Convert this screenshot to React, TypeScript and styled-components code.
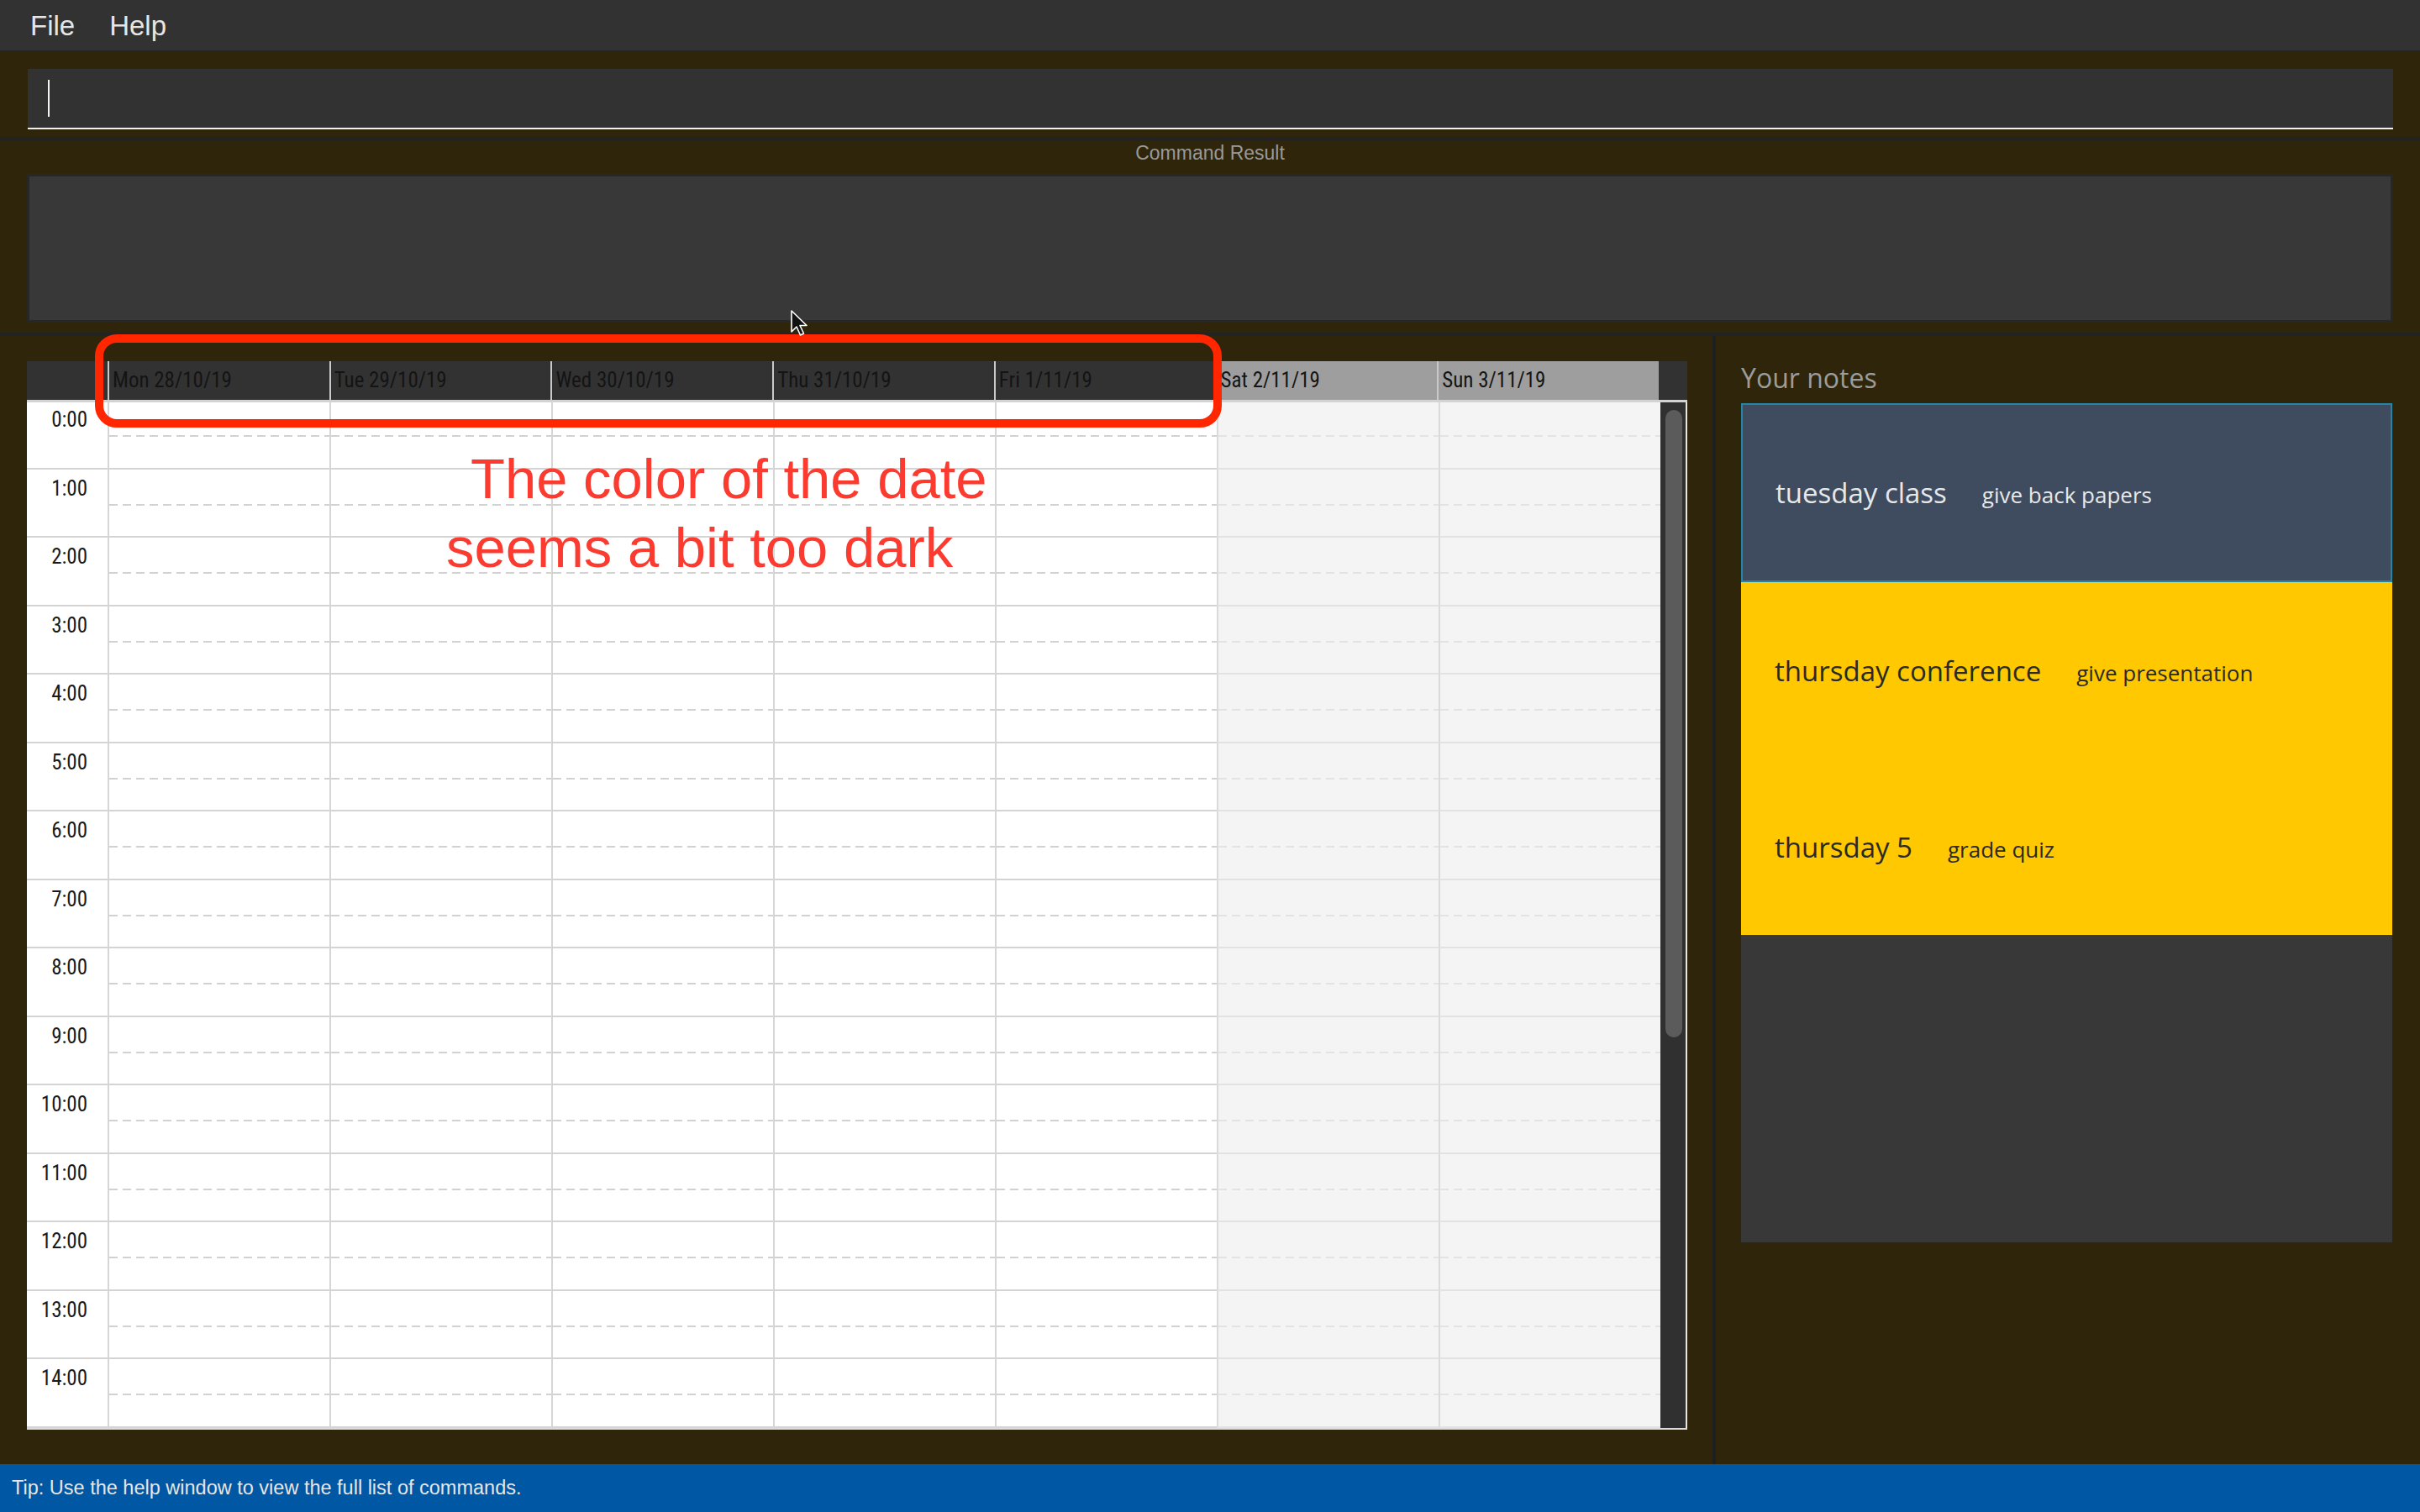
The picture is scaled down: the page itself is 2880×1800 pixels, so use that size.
import React from 'react';
import styled, { createGlobalStyle, css } from 'styled-components';

const GlobalStyle = createGlobalStyle`
  html, body {
    margin: 0;
    padding: 0;
    background: #2e250a;
  }
  body {
    font-family: "Liberation Sans", Arial, sans-serif;
  }
  * {
    box-sizing: border-box;
  }
`;

const condensed = css`
  font-family: "Roboto Condensed", "Liberation Sans Narrow", "DejaVu Sans Condensed", Roboto, sans-serif;
  font-stretch: 87%;
`;

const Window = styled.div`
  position: relative;
  width: 2880px;
  height: 1800px;
  display: flex;
  flex-direction: column;
  background: #2e250a;
  overflow: hidden;
`;

/* ---------- menu ---------- */

const MenuBar = styled.div`
  flex: none;
  height: 62px;
  display: flex;
  align-items: center;
  gap: 41px;
  padding: 2px 0 0 36px;
  background: #323232;
  border-bottom: 2px solid #262626;
`;

const MenuItem = styled.span`
  font-size: 33px;
  color: #e6e6e6;
`;

/* ---------- command box + result ---------- */

const CommandPanel = styled.div`
  flex: none;
  padding: 20px 32px 9px 33px;
  border-bottom: 5px solid #232323;
`;

const CommandBox = styled.div`
  height: 72px;
  display: flex;
  align-items: center;
  padding-left: 24px;
  background: #323232;
  border-bottom: 2px solid #f0f0f0;
`;

const Caret = styled.div`
  width: 2px;
  height: 44px;
  background: #f4f4f4;
`;

const ResultPanel = styled.div`
  flex: none;
  height: 232px;
  display: flex;
  flex-direction: column;
  padding: 0 32px 12px 32px;
  border-bottom: 4px solid #232323;
`;

const ResultLabel = styled.div`
  font-size: 23px;
  line-height: 28px;
  text-align: center;
  color: #999999;
`;

const ResultBox = styled.div`
  flex: 1;
  margin-top: 11px;
  background: #383838;
  border: 3px solid #272727;
`;

/* ---------- main area ---------- */

const Main = styled.div`
  flex: 1;
  display: flex;
  min-height: 0;
`;

const CalendarPane = styled.div`
  flex: none;
  width: 2042px;
  display: flex;
  flex-direction: column;
  padding: 30px 30px 41px 32px;
  border-right: 4px solid #1e1f21;
`;

const CalendarFrame = styled.div`
  flex: 1;
  display: flex;
  flex-direction: column;
  min-height: 0;
`;

const HeaderRow = styled.div`
  flex: none;
  height: 46px;
  display: grid;
  grid-template-columns: 96px repeat(7, 1fr) 34px;
  background: #323232;
`;

const DayHeader = styled.div<{ $weekend?: boolean }>`
  ${condensed}
  font-size: 25px;
  line-height: 46px;
  padding-left: 4px;
  color: #141414;
  white-space: nowrap;
  overflow: hidden;
  border-left: 2px solid #c9c9c9;
  background: ${p => (p.$weekend ? '#9e9e9e' : 'transparent')};
`;

const Body = styled.div`
  flex: 1;
  display: flex;
  min-height: 0;
  border-top: 3px solid #d3d3d3;
  border-bottom: 2px solid #dcdcdc;
  overflow: hidden;
`;

const Grid = styled.div`
  flex: 1;
  display: flex;
  flex-direction: column;
  background: #ffffff;
`;

const GridInner = styled.div`
  margin-top: -2px;
`;

const HourRow = styled.div`
  height: 81.5px;
  display: grid;
  grid-template-columns: 96px repeat(7, 1fr);
`;

const TimeCell = styled.div`
  ${condensed}
  font-size: 25px;
  line-height: 30px;
  padding: 8px 24px 0 0;
  text-align: right;
  color: #1a1a1a;
  background: #ffffff;
  border-bottom: 2px solid #d4d4d4;
`;

const DayCell = styled.div<{ $weekend?: boolean }>`
  background-color: ${p => (p.$weekend ? '#f4f4f4' : '#ffffff')};
  background-image: repeating-linear-gradient(
    90deg,
    ${p => (p.$weekend ? '#e3e3e3' : '#d2d2d2')} 0 10px,
    transparent 10px 16px
  );
  background-size: 100% 2px;
  background-position: 0 41px;
  background-repeat: no-repeat;
  border-left: 2px solid ${p => (p.$weekend ? '#dadada' : '#d6d6d6')};
  border-bottom: 2px solid ${p => (p.$weekend ? '#e2e2e2' : '#d4d4d4')};
`;

const ScrollTrack = styled.div`
  flex: none;
  width: 32px;
  padding: 9px 0 0 6px;
  background: #303030;
  border-right: 2px solid #e6e6e6;
`;

const ScrollThumb = styled.div`
  width: 20px;
  height: 747px;
  border-radius: 10px;
  background: #5b5b5b;
`;

/* ---------- notes ---------- */

const NotesPane = styled.div`
  flex: 1;
  display: flex;
  flex-direction: column;
  padding: 30px 33px 0 30px;
`;

const NotesTitle = styled.div`
  font-family: "Open Sans", "Liberation Sans", sans-serif;
  font-size: 32px;
  line-height: 40px;
  margin-bottom: 10px;
  color: #9c9c9c;
`;

const NoteList = styled.div`
  height: 999px;
  display: flex;
  flex-direction: column;
  background: #383838;
`;

const NoteCard = styled.div<{ $selected?: boolean }>`
  flex: none;
  height: ${p => (p.$selected ? '213px' : '210px')};
  display: flex;
  align-items: center;
  padding-left: ${p => (p.$selected ? '39px' : '40px')};
  background: ${p => (p.$selected ? '#3f4c5f' : '#ffc800')};
  border: ${p => (p.$selected ? '2px solid #2386a5' : 'none')};
  color: ${p => (p.$selected ? '#e8e8e8' : '#2a2a2a')};
  font-family: "Open Sans", "Liberation Sans", sans-serif;
`;

const NoteLine = styled.div`
  display: flex;
  align-items: baseline;
  gap: 42px;
`;

const NoteTitle = styled.span`
  font-size: 33px;
`;

const NoteDesc = styled.span`
  font-size: 26px;
`;

/* ---------- status ---------- */

const StatusBar = styled.div`
  flex: none;
  height: 57px;
  display: flex;
  align-items: center;
  padding-left: 14px;
  background: #0057a4;
  color: #e6e6e6;
  font-size: 23.5px;
`;

/* ---------- annotation overlay ---------- */

const Overlay = styled.div`
  position: absolute;
  inset: 0;
  pointer-events: none;
`;

const RedFrame = styled.div`
  position: absolute;
  left: 113px;
  top: 398px;
  width: 1341px;
  height: 111px;
  border: 10px solid #ff2600;
  border-radius: 26px;
`;

const RemarkLine = styled.div<{ $left: number; $top: number }>`
  position: absolute;
  left: ${p => p.$left}px;
  top: ${p => p.$top}px;
  font-family: "Liberation Sans", Arial, sans-serif;
  font-size: 67px;
  line-height: 82px;
  color: #fc3b30;
  white-space: nowrap;
`;

const Pointer = styled.svg`
  position: absolute;
  left: 940px;
  top: 368px;
`;

const days = [
  { label: 'Mon 28/10/19', weekend: false },
  { label: 'Tue 29/10/19', weekend: false },
  { label: 'Wed 30/10/19', weekend: false },
  { label: 'Thu 31/10/19', weekend: false },
  { label: 'Fri 1/11/19', weekend: false },
  { label: 'Sat 2/11/19', weekend: true },
  { label: 'Sun 3/11/19', weekend: true },
];

// only the hours that fit in the visible part of the day view
const hours = Array.from({ length: 15 }, (_, i) => `${i}:00`);

const notes = [
  { title: 'tuesday class', desc: 'give back papers', selected: true },
  { title: 'thursday conference', desc: 'give presentation', selected: false },
  { title: 'thursday 5', desc: 'grade quiz', selected: false },
];

export default function App() {
  return (
    <>
      <GlobalStyle />
      <Window>
        <MenuBar>
          <MenuItem>File</MenuItem>
          <MenuItem>Help</MenuItem>
        </MenuBar>

        <CommandPanel>
          <CommandBox>
            <Caret />
          </CommandBox>
        </CommandPanel>

        <ResultPanel>
          <ResultLabel>Command Result</ResultLabel>
          <ResultBox />
        </ResultPanel>

        <Main>
          <CalendarPane>
            <CalendarFrame>
              <HeaderRow>
                <div />
                {days.map(d => (
                  <DayHeader key={d.label} $weekend={d.weekend}>
                    {d.label}
                  </DayHeader>
                ))}
                <div />
              </HeaderRow>
              <Body>
                <Grid>
                  <GridInner>
                    {hours.map(h => (
                      <HourRow key={h}>
                        <TimeCell>{h}</TimeCell>
                        {days.map(d => (
                          <DayCell key={d.label} $weekend={d.weekend} />
                        ))}
                      </HourRow>
                    ))}
                  </GridInner>
                </Grid>
                <ScrollTrack>
                  <ScrollThumb />
                </ScrollTrack>
              </Body>
            </CalendarFrame>
          </CalendarPane>

          <NotesPane>
            <NotesTitle>Your notes</NotesTitle>
            <NoteList>
              {notes.map(n => (
                <NoteCard key={n.title} $selected={n.selected}>
                  <NoteLine>
                    <NoteTitle>{n.title}</NoteTitle>
                    <NoteDesc>{n.desc}</NoteDesc>
                  </NoteLine>
                </NoteCard>
              ))}
            </NoteList>
          </NotesPane>
        </Main>

        <StatusBar>Tip: Use the help window to view the full list of commands.</StatusBar>

        <Overlay>
          <RedFrame />
          <RemarkLine $left={560} $top={529}>The color of the date</RemarkLine>
          <RemarkLine $left={531} $top={611}>seems a bit too dark</RemarkLine>
          <Pointer width="24" height="34" viewBox="0 0 24 34">
            <path
              d="M2 2 L2 27 L8 21 L12.5 31 L16.5 29 L12 19.5 L20 19.5 Z"
              fill="#111"
              stroke="#fff"
              strokeWidth="1.6"
              strokeLinejoin="round"
            />
          </Pointer>
        </Overlay>
      </Window>
    </>
  );
}
